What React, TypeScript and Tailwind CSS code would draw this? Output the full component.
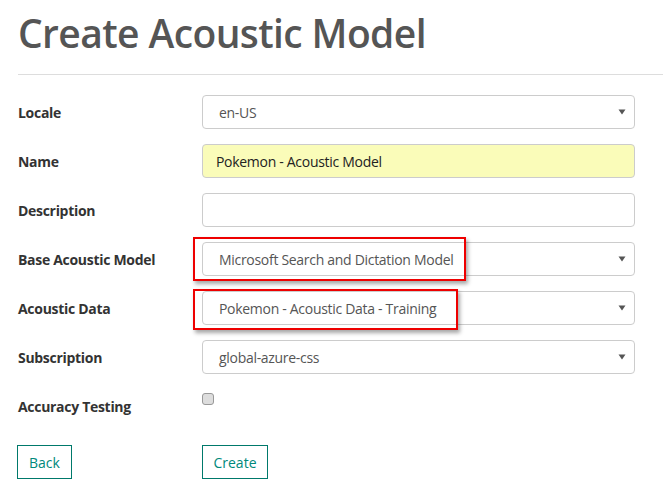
import React from 'react';

const font = { fontFamily: '"Open Sans", "Noto Sans", sans-serif' };

function Arrow() {
  return (
    <svg className="absolute right-[8px] top-1/2 -translate-y-1/2" width="8" height="6" viewBox="0 0 8 6">
      <path d="M0.5 0.5 L7.5 0.5 L4 5.5 Z" fill="#555" />
    </svg>
  );
}

function Select({ value }: { value: string }) {
  return (
    <div className="relative h-[34px] w-[433px] rounded-[4px] border border-[#ccc] bg-white flex items-center pl-[16px] text-[14px] tracking-[-0.3px] text-[#555]">
      {value}
      <Arrow />
    </div>
  );
}

function Row({ label, children }: { label: string; children: React.ReactNode }) {
  return (
    <div className="flex items-center h-[34px] mb-[15px]">
      <div className="w-[184px] text-[14px] font-bold tracking-[-0.3px] text-[#333]">{label}</div>
      {children}
    </div>
  );
}

export default function App() {
  return (
    <div className="w-[663px] h-[501px] bg-white overflow-hidden" style={font}>
      <div className="pl-[18px]">
        <h1 className="pt-[10px] text-[39px] leading-[46px] font-semibold text-[#555] tracking-[-0.6px]">Create Acoustic Model</h1>
        <div className="mt-[18px] h-px bg-[#ddd]" />

        <div className="mt-[20px]">
          <Row label="Locale">
            <Select value="en-US" />
          </Row>
          <Row label="Name">
            <div className="h-[34px] w-[433px] rounded-[4px] border border-[#ccc] bg-[#fafcb9] flex items-center pl-[13px] text-[14px] tracking-[-0.3px] text-[#222]">
              Pokemon - Acoustic Model
            </div>
          </Row>
          <Row label="Description">
            <div className="h-[34px] w-[433px] rounded-[4px] border border-[#ccc] bg-white" />
          </Row>
          <Row label="Base Acoustic Model">
            <div className="relative">
              <Select value="Microsoft Search and Dictation Model" />
              <div className="absolute left-[-9px] top-[-5px] w-[273px] h-[44px] border-2 border-[#e00] shadow-[2px_3px_4px_rgba(0,0,0,0.35)]" />
            </div>
          </Row>
          <Row label="Acoustic Data">
            <div className="relative">
              <Select value="Pokemon - Acoustic Data - Training" />
              <div className="absolute left-[-9px] top-[-2px] w-[265px] h-[41px] border-2 border-[#e00] shadow-[2px_3px_4px_rgba(0,0,0,0.35)]" />
            </div>
          </Row>
          <Row label="Subscription">
            <Select value="global-azure-css" />
          </Row>
          <div className="flex h-[34px]">
            <div className="w-[184px] self-center text-[14px] font-bold tracking-[-0.3px] text-[#333]">Accuracy Testing</div>
            <div className="mt-[4px] h-[12px] w-[12px] rounded-[3px] border border-[#999] bg-[#ddd]" />
          </div>
        </div>

        <div className="flex mt-[22px]">
          <div className="w-[184px]">
            <button className="-ml-px h-[34px] w-[55px] border border-[#00796b] text-[14px] text-[#00897b] bg-white">Back</button>
          </div>
          <button className="h-[34px] w-[66px] border border-[#00796b] text-[14px] text-[#00897b] bg-white">Create</button>
        </div>
      </div>
    </div>
  );
}
